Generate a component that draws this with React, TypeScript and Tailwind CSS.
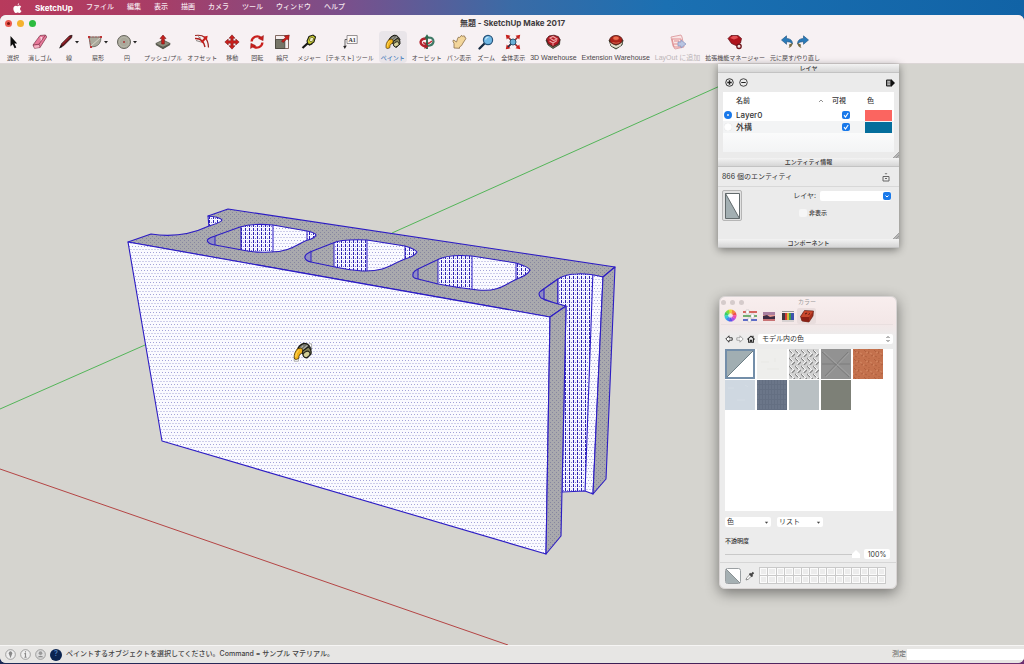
import React from "react";

type Tool = { label: string; icon: React.ReactNode; drop?: boolean; active?: boolean; disabled?: boolean; wide?: boolean; latin?: boolean };

function Svg({ children, wide }: { children: React.ReactNode; wide?: boolean }) {
  return (
    <svg aria-hidden="true" viewBox={wide ? "0 0 30 16" : "0 0 16 16"} className={wide ? "h-4 w-[30px] shrink-0" : "size-4 shrink-0"}>
      {children}
    </svg>
  );
}

function Bucket() {
  return (
    <g strokeLinejoin="round">
      <path d="M3.500 6.500Q5 2.500 9 1.200q3-.4 4.500 2L15 6l-7 3.500Z" fill="#6f7068" stroke="#16160f" strokeWidth="1" />
      <path d="M5 6.500 8.500 3M7.500 7 12 2.800" stroke="#b9b8ae" strokeWidth=".9" />
      <path d="M4 5.500C1.500 8 .8 10.500 1 13.300q.3 1.400 1.800 1.200l2-.8Q4.600 11.500 6 10l3-1.800L7 5Z" fill="#f3b41a" stroke="#4b3708" strokeWidth=".7" />
      <path d="M2.300 12.500Q2.300 9 4.600 7" fill="none" stroke="#ffdc6e" strokeWidth=".8" />
      <path d="M8 7.500 13 4q2.600 2.500 2 6l-3.500 3.300Q8 12.500 8 7.500Z" fill="#87865d" stroke="#1b1b14" strokeWidth="1" />
      <ellipse cx="11.300" cy="10.300" rx="3" ry="2.300" transform="rotate(-35 11.300 10.300)" fill="#d2ce96" stroke="#22221a" strokeWidth=".9" />
      <path d="M13 4.500q2-1 2 1.500" fill="none" stroke="#444" strokeWidth=".8" />
    </g>
  );
}

const RED = "#c9201d";

const tools: Tool[] = [
  { label: "選択", icon: <path d="M5.500 2v10.500l2.200-2.200 1.900 4 1.700-.8-1.800-3.900h2.700Z" fill="#0c0c0c" /> },
  {
    label: "消しゴム",
    icon: (
      <g stroke="#7a3446" strokeWidth=".7" strokeLinejoin="round">
        <path d="M1 11 8 1.500l5.500-.5 1.200 2L8 13.500l-5.500.8Z" fill="#e8799a" />
        <path d="m1 11 6-.8L13.500 1M7 10.200l1 3.300" fill="none" />
        <path d="m2 11.700 5-.7.7 2.200-5 .7Z" fill="#f4b3c4" stroke="none" />
        <path d="m8 4 2-.5-1 3" fill="none" stroke="#fff" />
      </g>
    ),
  },
  {
    label: "線",
    drop: true,
    icon: (
      <g>
        <path d="m2.500 13 1-3.200 8-8 2.600-.5-.6 2.500-8 8Z" fill="#6b1219" stroke="#1b0b0d" strokeWidth=".7" />
        <path d="m1 14.500 1.800-3.200 1.600 1.600Z" fill="#111" />
        <path d="m4.500 10 7-7" stroke="#c7383c" strokeWidth=".8" />
      </g>
    ),
  },
  {
    label: "扇形",
    drop: true,
    icon: (
      <g>
        <path d="M2 3h12q0 8-6 9.500L3.500 13Z" fill="#aaa99b" stroke="#6d6b62" strokeWidth=".9" />
        <path d="m3.500 12.500 10-9" stroke="#ded9cc" strokeWidth=".9" />
        <path d="M2 3h12M2 3l2 10" fill="none" stroke="#b85656" strokeWidth=".7" strokeDasharray="2 1" />
        <path d="M1 2h2v2H1zm12 0h2v2h-2zM3 12h2v2H3z" fill="#bd3434" />
      </g>
    ),
  },
  {
    label: "円",
    drop: true,
    icon: (
      <g>
        <circle cx="8" cy="8" r="6.500" fill="#aaa99b" stroke="#66655c" />
        <circle cx="8" cy="8" r="4.800" fill="none" stroke="#c0beb2" strokeWidth=".6" />
        <circle cx="8" cy="8" r="1" fill="#a93535" />
      </g>
    ),
  },
  {
    label: "プッシュ/プル",
    icon: (
      <g>
        <path d="m.8 9.500 7.200-3.500 7.200 3.500L8 14.500Z" fill="#8c8d7c" stroke="#44453b" strokeWidth=".7" />
        <path d="m.8 9.500 7.200 3.200 7.200-3.200v1.600L8 15.200.8 11Z" fill="#595a4f" />
        <path d="M8 1 11 4.600H9.300V10H6.700V4.600H5Z" fill={RED} stroke="#741312" strokeWidth=".6" />
      </g>
    ),
  },
  {
    label: "オフセット",
    icon: (
      <g fill="none">
        <path d="M1 1.500Q14-.5 14.500 13.500" stroke="#9b2421" strokeWidth="1.200" />
        <path d="M1 4.500q8-.5 10 8.500" stroke="#ae1d1b" strokeWidth="1.400" />
        <path d="m7.500 8.500 4-4.500" stroke={RED} strokeWidth="2" />
        <path d="m9.200 2.700 4.500-.9-.9 4.700Z" fill={RED} />
        <path d="M2 6.500 7 8M4 2.500l3 2" stroke="#5a5751" strokeWidth=".7" />
      </g>
    ),
  },
  {
    label: "移動",
    icon: <path d="m8 .8 3 3.400H9.200v2.600h2.600V5l3.400 3-3.400 3V9.200H9.200v2.600H11l-3 3.400-3-3.400h1.800V9.200H4.200V11L.8 8l3.400-3v1.800h2.600V4.200H5Z" fill={RED} stroke="#6e1110" strokeWidth=".5" />,
  },
  {
    label: "回転",
    icon: (
      <g>
        <path d="M2.600 7.500A5.500 5.500 0 0 1 12 4M13.400 8.500A5.500 5.500 0 0 1 4 12" fill="none" stroke={RED} strokeWidth="2.300" />
        <path d="m14.500 1.500-.4 5.200-4.700-2.200ZM1.500 14.500l.4-5.200 4.700 2.200Z" fill={RED} stroke="#851513" strokeWidth=".4" />
      </g>
    ),
  },
  {
    label: "縮尺",
    icon: (
      <g>
        <path d="M1.500 1.500h13v13h-13Z" fill="#f4eeee" stroke="#66483f" strokeWidth=".8" />
        <path d="M1.500 5.500h9.300v9H1.500Z" fill="#777668" stroke="#42413a" strokeWidth=".8" />
        <path d="m7.500 7 4-3.500L10.300 2l5-1-.8 5.200L13 5 9 8.600Z" fill={RED} stroke="#741312" strokeWidth=".5" />
      </g>
    ),
  },
  {
    label: "メジャー",
    icon: (
      <g>
        <path d="m7 9-5.500 5" stroke="#171714" strokeWidth="2.200" />
        <path d="m6 9 2.500 2 3-1.500" fill="none" stroke="#1b1c12" strokeWidth="1.200" />
        <path d="M6 7 8 2.500 12 1l2.500 2-1.500 5L9.500 10.500 7 10Z" fill="#cfd02f" stroke="#1b1c12" strokeWidth="1.100" />
        <ellipse cx="10.500" cy="5.500" rx="1.800" ry="2.400" transform="rotate(30 10.500 5.500)" fill="#efeec2" stroke="#5d5e1f" strokeWidth=".8" />
      </g>
    ),
  },
  {
    label: "[テキスト] ツール",
    icon: (
      <g>
        <path d="M5 1.500h10.200v8H5Z" fill="#fcf9f9" stroke="#807b7b" strokeWidth=".8" />
        <path d="M5 5.500H3V13" fill="none" stroke="#555" strokeWidth=".9" />
        <path d="m1.200 12 3.600-.5-2 3.500Z" fill="#282525" />
        <text x="6.500" y="8" className="fill-[#333] font-['Liberation_Serif',serif] text-[6px] font-bold">A1</text>
      </g>
    ),
  },
  { label: "ペイント", active: true, icon: <Bucket /> },
  {
    label: "オービット",
    icon: (
      <g fill="none">
        <path d="M9.500 3.500q5 0 5 4.300-.7 4-6 4" stroke="#407b67" strokeWidth="2.200" />
        <path d="M6.500 12.500Q1 11 1.700 7.500 2.500 4.500 7 4.500" stroke="#b5222c" strokeWidth="2.400" />
        <path d="M4 8.500q5 2.500 9-1.500" stroke="#bd3038" strokeWidth="1.500" />
        <path d="M8 4v11" stroke="#265c40" strokeWidth="1.800" />
        <path d="m8 .3 2.800 4.200H5.200Z" fill="#2d6b4f" />
        <path d="m5.500 9 4 3.500-4 2.500Z" fill="#aa202a" />
      </g>
    ),
  },
  {
    label: "パン表示",
    icon: <path d="M3 14V9.500Q1.500 7 2 6.300q1-.5 2 .7L5.500 8 7 3.500q1.200-.8 1.500.2L10 1.700q1.300-.4 1.400.6L13 1.800q1.200.2.600 1.400l.8.200q.9.500.3 1.500L12 9q-1 3-3.500 4v1.300Z" fill="#f3d69b" stroke="#8b704a" strokeWidth=".8" strokeLinejoin="round" />,
  },
  {
    label: "ズーム",
    icon: (
      <g>
        <path d="m6.500 9.500-5 5" stroke="#152b43" strokeWidth="2.300" strokeLinecap="round" />
        <circle cx="10" cy="6" r="4.600" fill="#70b8e5" stroke="#28547b" strokeWidth="1.200" />
        <path d="M7.500 5.500Q8 3.200 10.500 3" fill="none" stroke="#cdecfa" strokeWidth="1.200" />
      </g>
    ),
  },
  {
    label: "全体表示",
    icon: (
      <g>
        <path d="m2.500 2.500 4 4m7-4-4 4m-7 7 4-4m7 4-4-4" stroke="#9c2626" strokeWidth="1.600" />
        <path d="m.8.8 4.700.9L1.700 5.500Zm14.400 0-4.700.9 3.800 3.800ZM.8 15.200l4.700-.9-3.800-3.800Zm14.400 0-4.700-.9 3.800-3.800Z" fill={RED} />
        <path d="m6 10-3 3" stroke="#18334e" strokeWidth="1.500" />
        <circle cx="8" cy="8" r="3" fill="#68b1d8" stroke="#285470" />
      </g>
    ),
  },
  {
    label: "3D Warehouse",
    latin: true,
    icon: (
      <g>
        <path d="m1 6 2 5 5 3.500 6.500-4L15 5Z" fill="#6b7259" stroke="#313629" strokeWidth=".8" />
        <path d="m1.500 5 2.500-3 5-.8 4.500 1.500L15 6l-2 4-5 2.500L3 9.500Z" fill="#b31d25" stroke="#491115" strokeWidth=".8" />
        <path d="m5 4 3-1.500L12 5 8.500 6.500ZM4.500 7 8 9l4-2.500M8 9v2.500" fill="none" stroke="#efa3a4" strokeWidth="1.100" />
      </g>
    ),
  },
  {
    label: "Extension Warehouse",
    latin: true,
    icon: (
      <g>
        <path d="m1 6 2 6 5 3 6-4 1-5Z" fill="#727960" stroke="#303727" strokeWidth=".9" />
        <path d="m1.500 8 6.500 4 6.500-4-2 4-4.500 2-4.500-2Z" fill="#e3dfce" />
        <ellipse cx="8" cy="6" rx="6.300" ry="4.500" fill="#ae2018" stroke="#4a1914" strokeWidth=".8" />
        <ellipse cx="8" cy="4.200" rx="3.200" ry="2.200" fill="#ef6d4e" stroke="#8c1b15" strokeWidth=".6" />
        <path d="M4.500 8.500q3.500 1.500 7 0" fill="none" stroke="#d9765c" strokeWidth=".8" />
      </g>
    ),
  },
  {
    label: "LayOut に追加",
    latin: true,
    disabled: true,
    icon: (
      <g>
        <path d="m1 3 10-2 1 2 2 10-9 2-2-3Z" fill="#fae6e6" stroke="#db9b9e" strokeWidth=".9" />
        <path d="M2 5h9v8H4ZM4 7h5v3H4" fill="none" stroke="#df8e91" />
        <path d="M8 8h3V6l5 4-5 4v-2H8Z" fill="#b8c4e1" stroke="#8495c1" strokeWidth=".7" />
      </g>
    ),
  },
  {
    label: "拡張機能マネージャー",
    icon: (
      <g>
        <path d="m1 4.500 3-3h7l3.500 3-1 4.500-3 2.500H9l-4.500-2Z" fill="#ae131c" stroke="#590c12" strokeWidth=".7" />
        <path d="m3 4 3-2h4l1 2-4 1.500Z" fill="#e35155" />
        <circle cx="12" cy="12.300" r="2.200" fill="#eee2df" stroke="#6d1218" strokeWidth="1.300" />
      </g>
    ),
  },
  {
    label: "元に戻す/やり直し",
    wide: true,
    icon: (
      <g>
        <path d="m1.500 6 5-4.200v2.600q6 .3 6 5.600-1.800-2.700-6-2.300v2.600Z" fill="#297ab9" stroke="#1b507e" strokeWidth=".6" />
        <path d="M12.500 9q0 4-4 5 1.500-1.500.5-3.500" fill="#776b41" />
        <path d="m28.500 6-5-4.200v2.600q-6 .3-6 5.600 1.800-2.700 6-2.300v2.600Z" fill="#297ab9" stroke="#1b507e" strokeWidth=".6" />
        <path d="M17.500 9q0 4 4 5-1.500-1.500-.5-3.500" fill="#776b41" />
      </g>
    ),
  },
];

const menus = ["ファイル", "編集", "表示", "描画", "カメラ", "ツール", "ウィンドウ", "ヘルプ"];

function MenuBar() {
  return (
    <nav className="flex h-[15px] shrink-0 items-center gap-[13px] bg-[linear-gradient(90deg,#b83a5c_0%,#a83d66_15%,#79508c_34%,#3a6ba6_50%,#1b70b2_65%,#1163a6_100%)] pl-[13px] text-[7px] font-medium text-[#f5e6ee]">
      <button aria-label="Apple" className="flex">
        <svg viewBox="0 0 16 18" className="h-2.5 w-[9px]">
          <path d="M11 0q.2 3-3 4.300Q8 1.500 11 0Zm0 4.700q2.200 0 3.700 2-2.500 1.500-2.200 4 .2 2.300 2.800 3.500Q13.500 18 11.500 18c-1.500 0-1.700-.8-3.200-.8S6.500 18 5 18C3 18 .5 13.500.5 10.200.5 6.800 2.800 4.800 5 4.800c1.500 0 2.400.9 3.400.9S10 4.700 11 4.700Z" fill="#fff" />
        </svg>
      </button>
      <button className="text-[8px] font-bold text-white">SketchUp</button>
      {menus.map((m) => (
        <button key={m} className="whitespace-nowrap">{m}</button>
      ))}
    </nav>
  );
}

function Toolbar() {
  return (
    <header className="shrink-0 border-b border-[#dcd6d6] bg-[#f7f1f3]">
      <div className="grid h-4 grid-cols-[1fr_auto_1fr] items-center pl-[5px] pr-1">
        <div className="flex gap-[5px]">
          <button aria-label="閉じる" className="flex size-[7px] items-center justify-center rounded-full bg-[#ec5b51]"><span className="size-[3px] rounded-full bg-[#7e1611]" /></button>
          <button aria-label="しまう" className="size-[7px] rounded-full bg-[#f4b22e]" />
          <button aria-label="拡大" className="size-[7px] rounded-full bg-[#2dbb3f]" />
        </div>
        <h1 className="text-[8px] font-bold text-[#3f3b3d]">無題 - SketchUp Make 2017</h1>
      </div>
      <div className="flex h-8 gap-[5px] pl-[3px]">
        {tools.map((t) => (
          <button
            key={t.label}
            disabled={t.disabled}
            className={
              "flex shrink-0 flex-col items-center gap-[3px] whitespace-nowrap leading-[9px] pt-[3px] " +
              (t.latin ? "font-['Liberation_Sans','Noto_Sans_CJK_JP',sans-serif] text-[7px] " : "text-[6px] ") +
              (t.drop ? "min-w-6 " : "min-w-5 ") +
              (t.active ? "rounded-sm bg-[#e9e5e9] px-0.5 text-[#2264b2]" : t.disabled ? "text-[#bab4b6]" : "text-[#4a4648]")
            }
          >
            <span className="flex items-center">
              <Svg wide={t.wide}>{t.icon}</Svg>
              {t.drop && <svg aria-hidden="true" viewBox="0 0 6 6" className="size-1.5"><path d="M1 2h4L3 4.500Z" fill="#222" /></svg>}
            </span>
            {t.label}
          </button>
        ))}
      </div>
    </header>
  );
}

const notch = "M541 298Q537 293 541 291L558 279Q566 274 577 274Q586 273 603 277L593 494L585 491L562 492L566 306Q553 303 541 298Z";
const hole1 = "M208 242Q205 239 215 236L240 227Q253 223 273 225L307 231Q316 233 316 235Q315 238 308 240C298 243 291 252 270 252Q255 253 242 250L215 245Q209 244 208 242Z";
const hole2 = "M305 258Q304 255 310 252L333 243Q342 239 367 240L405 246Q415 249 417 252Q415 256 405 259C393 263 386 272 362 271Q348 270 335 267L311 262Q306 261 305 258Z";
const hole3 = "M413 276Q412 272 418 269L437 260Q448 254 472 256L516 263Q529 267 530 270Q528 275 517 279C505 284 500 292 478 290Q459 288 438 284L418 279Q413 278 413 276Z";

const holes = [
  { id: "h1", d: hole1, small: 215, left: 241, mid: 273, right: 307, top: 222, bottom: 254 },
  { id: "h2", d: hole2, small: 311, left: 334, mid: 367, right: 405, top: 238, bottom: 273 },
  { id: "h3", d: hole3, small: 418, left: 438, mid: 472, right: 516, top: 253, bottom: 292 },
];

function Model() {
  const edge = { stroke: "#2c1cc4", strokeWidth: 1.1, strokeLinejoin: "round" as const };
  return (
    <svg role="img" aria-label="モデル" viewBox="0 64 1024 581" preserveAspectRatio="xMinYMin slice" className="block h-full w-full">
      <defs>
        <pattern id="light" width="3" height="6" patternUnits="userSpaceOnUse">
          <rect width="3" height="6" fill="#fafaff" />
          <path d="M0 0h1v1H0zM1.500 3h1v1h-1z" fill="#a3a3d8" />
        </pattern>
        <pattern id="gray" width="4" height="4" patternUnits="userSpaceOnUse">
          <rect width="4" height="4" fill="#a9a9ad" />
          <path d="M0 0h1v1H0zM2 2h1v1H2z" fill="#8686a0" />
        </pattern>
        <pattern id="dense" width="4" height="4" patternUnits="userSpaceOnUse">
          <rect width="4" height="4" fill="#f4f4ff" />
          <path d="M1 0h1v3H1z" fill="#2d22b0" />
          <path d="M3 2h1v1H3z" fill="#7d78d0" />
        </pattern>
        {holes.map((h) => (
          <clipPath key={h.id} id={h.id}><path d={h.d} /></clipPath>
        ))}
        <clipPath id="notch"><path d={notch} /></clipPath>
      </defs>
      <path d="M0 409 145 345M392 233 740 77" stroke="#44b14b" strokeWidth=".9" fill="none" />
      <path d="M0 469 508 645" stroke="#b03434" strokeWidth=".9" />
      <path d="M208 216 222 216V224L209 227Z" fill="url(#dense)" {...edge} />
      <path d="M128 242 151 234Q181 239 209 226Q222 222 222 220Q220 217 208 216L228 209 615 267 603 277Q577 272 558 279L541 291Q537 296 545 300L566 306 550 317Z" fill="url(#gray)" {...edge} />
      <path d="M128 242 550 317 546 554 162 441Z" fill="url(#light)" {...edge} />
      {holes.map((h) => (
        <g key={h.id}>
          <g clipPath={`url(#${h.id})`} stroke="#2c1cc4">
            <path d={h.d} fill="url(#light)" stroke="none" />
            <rect x={h.small - 12} y={h.top} width={h.left - h.small + 12} height={h.bottom - h.top} fill="url(#gray)" stroke="none" />
            <rect x={h.small - 12} y={h.top} width="12" height={h.bottom - h.top} fill="#8f8cc4" />
            <rect x={h.left} y={h.top} width={h.mid - h.left} height={h.bottom - h.top} fill="url(#dense)" />
            <rect x={h.right} y={h.top} width="16" height={h.bottom - h.top} fill="url(#dense)" />
          </g>
          <path d={h.d} fill="none" {...edge} />
        </g>
      ))}
      <path d={notch} fill="url(#light)" />
      <g clipPath="url(#notch)">
        <path d="M538 275H558V310H538Z" fill="url(#gray)" {...edge} />
        <path d="M558 270H593L585 493H558Z" fill="url(#dense)" {...edge} />
        <path d="M538 285H544V300H538Z" fill="#8f8cc4" {...edge} />
      </g>
      <path d={notch} fill="none" {...edge} />
      <path d="M603 277 615 267 606 479 593 494Z" fill="url(#gray)" {...edge} />
      <path d="M550 317 566 306 561 536 546 554Z" fill="url(#gray)" {...edge} />
      <g transform="translate(293 342) scale(1.2)">
        <path d="M1 13.500h3.500v2.500H1ZM13 1.500h2.500v4" fill="#fff" stroke="#777" strokeWidth=".5" />
        <Bucket />
      </g>
    </svg>
  );
}

function PanelHeader({ children }: { children: React.ReactNode }) {
  return (
    <h2 className="flex h-[9px] items-center justify-center border-b border-[#c3c3c3] bg-gradient-to-b from-[#f3f3f3] to-[#d6d6d6] text-[6px] font-medium text-[#333]">{children}</h2>
  );
}

function Grip() {
  return <svg aria-hidden="true" viewBox="0 0 6 6" className="ml-auto size-1.5"><path d="M0 6 6 0V6Z" fill="#b5b5b5" /><path d="M0 6 6 0M3 6l3-3" stroke="#8d8d8d" strokeWidth=".7" /></svg>;
}

function Check({ label, on }: { label: string; on?: boolean }) {
  return (
    <span className="relative flex size-2 items-center justify-center">
      <input type="checkbox" aria-label={label} defaultChecked={on} className="peer size-2 appearance-none rounded-xs bg-[#f6f6f6] checked:bg-[#1979ea]" />
      <svg aria-hidden="true" viewBox="0 0 8 8" className="pointer-events-none absolute hidden size-2 peer-checked:block"><path d="M2 4.200 3.500 6 6.200 2" fill="none" stroke="#fff" strokeWidth="1.100" /></svg>
    </span>
  );
}

const layers = [
  { name: "Layer0", color: "bg-[#fb6560]", row: "bg-white", on: true },
  { name: "外構", color: "bg-[#056e9c]", row: "bg-[#f3f4f5]", on: false },
];

function LayerPanel() {
  return (
    <section className="absolute right-[125px] top-0 w-[181px] rounded-b-sm bg-[#ebebeb] text-[7px] leading-[8px] text-[#333] shadow-[0_2px_8px_rgba(0,0,0,0.45)]">
      <PanelHeader>レイヤ</PanelHeader>
      <div className="flex h-[19px] items-center gap-[5px] pl-[7px] pr-1">
        <button aria-label="レイヤを追加"><svg viewBox="0 0 10 10" className="size-[9px]"><circle cx="5" cy="5" r="4.200" fill="none" stroke="#222" /><path d="M5 2.500v5M2.500 5h5" stroke="#222" strokeWidth="1.500" /></svg></button>
        <button aria-label="レイヤを削除"><svg viewBox="0 0 10 10" className="size-[9px]"><circle cx="5" cy="5" r="4.200" fill="none" stroke="#333" /><path d="M2.500 5h5" stroke="#222" strokeWidth="1.200" /></svg></button>
        <button aria-label="詳細" className="ml-auto"><svg viewBox="0 0 10 10" className="size-[10px]"><path d="M1.500 2h4.500v6H1.500Z" fill="#777" stroke="#222" /><path d="M2.500 3.500h2.500M2.500 5h2.500M2.500 6.500h2.500" stroke="#ddd" strokeWidth=".6" /><path d="M6 1 10 5 6 9Z" fill="#111" /></svg></button>
      </div>
      <div className="mx-[5px] h-[60px] bg-gradient-to-b from-white via-white to-[#f3f4f5]">
        <table className="w-full table-fixed border-collapse text-left">
          <thead>
            <tr className="h-[17px]">
              <th className="w-[13px]" aria-label="現在" />
              <th className="font-medium"><span className="flex items-center justify-between pr-2">名前<svg aria-hidden="true" viewBox="0 0 6 6" className="size-1.5"><path d="m1 4 2-2 2 2" fill="none" stroke="#777" strokeWidth=".8" /></svg></span></th>
              <th className="w-[33px] font-medium">可視</th>
              <th className="w-[29px] pl-0.5 font-medium">色</th>
            </tr>
          </thead>
          <tbody>
            {layers.map((l) => (
              <tr key={l.name} className={"h-3 " + l.row}>
                <td className="p-0 pl-px"><input type="radio" name="layer" aria-label={l.name} defaultChecked={l.on} className="block size-2 appearance-none rounded-full bg-white shadow-[inset_0_0_1px_#ccc] checked:border-[3px] checked:border-[#1979ea]" /></td>
                <td className="p-0 text-[8px] font-medium">{l.name}</td>
                <td className="p-0 pl-2.5"><Check label={l.name + " 可視"} on /></td>
                <td className="p-0"><div className={"h-[11px] w-[27px] " + l.color} /></td>
              </tr>
            ))}
          </tbody>
        </table>
      </div>
      <div className="h-1.5"><Grip /></div>
      <PanelHeader>エンティティ情報</PanelHeader>
      <div className="flex h-5 items-center justify-between border-b border-[#d8d8d8] pl-1 pr-2">
        <p>866 個のエンティティ</p>
        <button aria-label="詳細を表示"><svg viewBox="0 0 10 10" className="size-[10px]"><path d="M2 4.500h6V9H2ZM4 6.500h2" fill="none" stroke="#666" /><path d="M3.500 1h3L5 2.800Z" fill="#888" /></svg></button>
      </div>
      <div className="flex h-[46px] pl-1 pt-[3px]">
        <button aria-label="マテリアル" className="flex h-[31px] w-5 items-center justify-center rounded-xs border border-[#b5b5b5] bg-[#e2e2e2]">
          <svg viewBox="0 0 15 26" className="h-[26px] w-[15px]"><path d="M.5.500h14v25H.5Z" fill="#fff" /><path d="M.5.500 14.500 25.500H.5Z" fill="#a3afb2" /><path d="M.5.500h14v25H.5ZM.5.500l14 25" fill="none" stroke="#626a6c" /></svg>
        </button>
        <div className="flex flex-1 flex-col gap-2 pr-2 pt-px">
          <label className="flex h-2.5 items-center justify-end gap-1">
            レイヤ:
            <span className="relative flex w-[71px]">
              <select className="h-2.5 w-full appearance-none rounded-xs bg-white" defaultValue=""><option value="" /></select>
              <svg aria-hidden="true" viewBox="0 0 8 8" className="pointer-events-none absolute right-0 top-px size-2"><rect width="8" height="8" rx="2" fill="#1979ea" /><path d="m2.500 3.500 1.500 1.500 1.500-1.500" fill="none" stroke="#fff" /></svg>
            </span>
          </label>
          <div className="flex items-center gap-0.5 pl-[57px]"><Check label="非表示" /><span className="text-[6px] font-medium">非表示</span></div>
        </div>
      </div>
      <div className="h-1.5"><Grip /></div>
      <PanelHeader>コンポーネント</PanelHeader>
    </section>
  );
}

function Swatch({ kind }: { kind: number }) {
  return (
    <svg aria-hidden="true" viewBox="0 0 30 30" className="block size-[30px]">
      <defs>
        <pattern id="tread" width="6" height="8" patternUnits="userSpaceOnUse"><rect width="6" height="8" fill="#d2d2d2" /><path d="m0 1 3 3M3 8l3-3" stroke="#858585" strokeWidth="1.200" /><path d="m1 1 3 3M2 7l3-3" stroke="#f4f4f4" /></pattern>
        <pattern id="brick" width="10" height="9" patternUnits="userSpaceOnUse"><rect width="10" height="9" fill="#c4714d" /><path d="m1 1 2 2M6 2l-1 3M8 7l2-1M2 7l2 1M5 0h2" stroke="#ab5c3a" strokeWidth=".8" /><path d="m3 4 2-1M7 4l2 1M1 6l-1 2" stroke="#d58b66" strokeWidth=".8" /></pattern>
        <pattern id="slate" width="3" height="5" patternUnits="userSpaceOnUse"><rect width="3" height="5" fill="#646f82" /><path d="M1 0v4" stroke="#788295" strokeWidth=".7" /></pattern>
      </defs>
      {kind === 0 && <><rect width="30" height="30" fill="#738ea9" /><path d="M2 2h26v26H2Z" fill="#fff" /><path d="M2 2h26L2 28Z" fill="#a1aeb2" /><path d="M28 2 2 28" stroke="#6d7f86" /></>}
      {kind === 1 && <><rect width="30" height="30" fill="#eeeeec" /><path d="M4 13h8M18 9v4M10 20h12" stroke="#e8e8e5" /></>}
      {kind === 2 && <rect width="30" height="30" fill="url(#tread)" />}
      {kind === 3 && <><rect width="30" height="30" fill="#929292" /><path d="m1 3 27 25M27 3 4 27M1 15h28" stroke="#7d7d7d" /><path d="m3 3 26 24M28 4 5 28" stroke="#a8a8a8" strokeWidth=".7" /></>}
      {kind === 4 && <rect width="30" height="30" fill="url(#brick)" />}
      {kind === 5 && <><rect width="30" height="30" fill="#cfd8e1" /><path d="M3 8h6M20 5l3 2M12 20h8" stroke="#d5dde5" /></>}
      {kind === 6 && <rect width="30" height="30" fill="url(#slate)" />}
      {kind === 7 && <rect width="30" height="30" fill="#b9c0c3" />}
      {kind === 8 && <rect width="30" height="30" fill="#7d8077" />}
    </svg>
  );
}

const materialNames = ["デフォルト", "白", "鉄板", "石", "レンガ", "ガラス", "スレート", "グレー", "ダークグレー"];

const wheel = ["#f0504d", "#f18a3a", "#ecd738", "#7fdc3c", "#37cf6a", "#34cfd0", "#3b8fee", "#5a56e8", "#a94de6", "#ee4bb0"];

const modes = [
  {
    name: "カラーホイール",
    icon: (
      <g>
        {wheel.map((c, i) => {
          const a = (i * Math.PI) / 5;
          const b = ((i + 1) * Math.PI) / 5 + 0.05;
          return <path key={c} fill={c} d={`M7 7 ${7 + 6.5 * Math.cos(a)} ${7 - 6.5 * Math.sin(a)}A6.500 6.500 0 0 0 ${7 + 6.5 * Math.cos(b)} ${7 - 6.5 * Math.sin(b)}Z`} />;
        })}
        <circle cx="7" cy="7" r="2.500" fill="#fff" fillOpacity=".75" />
      </g>
    ),
  },
  { name: "スライダ", icon: <g><path d="M0 2h14v2H0z" fill="#d56560" /><path d="M0 6h14v2H0z" fill="#72ae71" /><path d="M0 10h14v2H0z" fill="#5d6cc7" /><path d="M3 1h3v4H3zm5 4h3v4H8zM5 9h3v4H5z" fill="#fff" stroke="#aaa" strokeWidth=".4" /></g> },
  { name: "画像", icon: <g><path d="M1 3h12v9H1Z" fill="#e99c94" /><path d="M1 3h12v3H1Z" fill="#a97fa0" /><path d="m1 7 4-1 3 2 5-1v3H1Z" fill="#3c2b42" /><path d="M1 10h12v2H1Z" fill="#c87274" /></g> },
  { name: "鉛筆", icon: <g><path d="M1 4h3v7H1Z" fill="#3f3742" /><path d="M4 4h2v7H4Z" fill="#d03c3a" /><path d="M6 4h2v7H6Z" fill="#d6b83a" /><path d="M8 4h2v7H8Z" fill="#3b9a50" /><path d="M10 4h3v7h-3Z" fill="#3d52ad" /><path d="M1 2h12v1H1z" fill="#999" /><path d="M1 12h12" stroke="#bbb" /></g> },
  { name: "マテリアル", icon: <g><path d="m.5 7.500 4-6 9 .5-.5 5-4 6-7-1Z" fill="#a32e1d" stroke="#56180f" strokeWidth=".6" /><path d="m1 8 3.500-6 8.500.5L9 8Z" fill="#c8482d" /><path d="m1 8 8 0v5l-7-1Z" fill="#8b2015" /><path d="m5 5 2-1M8.500 5.500l1.500-1" stroke="#54170f" /></g> },
];

function SmallSelect({ label, value }: { label: string; value: string }) {
  return (
    <span className="relative flex w-[46px] items-center">
      <select aria-label={label} className="h-2.5 w-full appearance-none rounded-xs bg-white pl-0.5 text-[7px] leading-[10px]"><option>{value}</option></select>
      <svg aria-hidden="true" viewBox="0 0 6 6" className="pointer-events-none absolute right-0.5 size-[5px]"><path d="M1 2h4L3 4.500Z" fill="#444" /></svg>
    </span>
  );
}

function ColorPanel() {
  return (
    <section className="absolute right-[127px] top-[232px] w-[178px] rounded-md border border-[#d8d4d4] bg-[linear-gradient(#f8eeee_0px,#f3e7e7_26px,#ececec_40px)] pl-[5px] pr-[3px] text-[7px] leading-[8px] text-[#333] shadow-[0_4px_14px_rgba(0,0,0,0.45)]">
      <div className="-ml-1 grid h-[10px] grid-cols-[1fr_auto_1fr] items-center">
        <div className="flex gap-1">
          {["閉じる", "しまう", "拡大"].map((n) => <button key={n} aria-label={n} className="size-[5px] rounded-full bg-[#d5cbcb]" />)}
        </div>
        <h2 className="text-[6px] text-[#999]">カラー</h2>
      </div>
      <div className="-ml-1 flex h-[18px] items-center border-b border-[#e9dfdf]">
        {modes.map((m, i) => (
          <button key={m.name} aria-label={m.name} className={"flex h-4 w-[19px] items-center justify-center " + (i === 4 ? "rounded-xs bg-[#e9dddd]" : "")}>
            <svg viewBox="0 0 14 14" className={i === 0 ? "size-[13px]" : "size-3.5"}>{m.icon}</svg>
          </button>
        ))}
      </div>
      <div className="flex h-6 items-center gap-[3px] pt-1">
        <button aria-label="戻る"><svg viewBox="0 0 10 10" className="size-2"><path d="m1 5 4-4v2.500h4v3H5V9Z" fill="#fff" stroke="#222" strokeWidth="1.100" /></svg></button>
        <button aria-label="進む"><svg viewBox="0 0 10 10" className="size-2"><path d="M9 5 5 1v2.500H1v3h4V9Z" fill="#fff" stroke="#999" strokeWidth="1.100" /></svg></button>
        <button aria-label="ホーム"><svg viewBox="0 0 10 10" className="size-2"><path d="m.5 5.500 4.500-4 4.500 4M2 5v4h2.200V6.500h1.600V9H8V5M7.500 1v2" fill="none" stroke="#222" strokeWidth="1.300" /></svg></button>
        <span className="relative flex flex-1 items-center">
          <select aria-label="コレクション" className="h-2.5 w-full appearance-none rounded-xs bg-white pl-1 text-[7px] leading-[10px]"><option>モデル内の色</option></select>
          <svg aria-hidden="true" viewBox="0 0 6 8" className="pointer-events-none absolute right-0.5 h-2 w-1.5"><path d="m1.500 3 1.500-1.500L4.500 3M1.500 5 3 6.500 4.500 5" fill="none" stroke="#444" strokeWidth=".8" /></svg>
        </span>
      </div>
      <div className="flex h-[162px] flex-wrap content-start gap-x-0.5 gap-y-px bg-white">
        {materialNames.map((n, i) => <button key={n} aria-label={n}><Swatch kind={i} /></button>)}
      </div>
      <div className="flex h-[22px] items-center gap-1.5">
        <SmallSelect label="表示" value="色" />
        <SmallSelect label="並び" value="リスト" />
      </div>
      <label htmlFor="opacity" className="flex h-4 items-center text-[6px] font-medium">不透明度</label>
      <div className="flex h-[13px] items-center gap-1 pb-[3px] pr-[3px]">
        <input id="opacity" type="range" defaultValue={100} className="h-2.5 min-w-0 flex-1 appearance-none bg-[linear-gradient(#c9c9c9,#c9c9c9)] bg-[length:100%_1px] bg-center bg-no-repeat [&::-webkit-slider-thumb]:h-2 [&::-webkit-slider-thumb]:w-2 [&::-webkit-slider-thumb]:appearance-none [&::-webkit-slider-thumb]:bg-white [&::-webkit-slider-thumb]:[clip-path:polygon(50%_0,100%_50%,100%_100%,0_100%,0_50%)]" />
        <input aria-label="不透明度の値" defaultValue="100%" className="h-2.5 w-[26px] rounded-xs bg-white text-center text-[7px]" />
      </div>
      <div className="-ml-[5px] -mr-[3px] flex h-[26px] items-center gap-1 border-t border-[#d6d6d6] pl-[5px] pr-2.5">
        <button aria-label="現在の色"><svg viewBox="0 0 16 16" className="size-4"><rect x=".5" y=".5" width="15" height="15" rx="2" fill="#fff" stroke="#9a9fa2" /><path d="m1 1 14 14H1Z" fill="#a5b0b3" /><path d="m1 1 14 14" stroke="#777f82" strokeWidth=".8" /></svg></button>
        <button aria-label="スポイト"><svg viewBox="0 0 10 10" className="size-[10px]"><path d="m1 9 .7-2.200L5.500 3 7 4.500 3.200 8.300Z" fill="#fff" stroke="#777" strokeWidth=".8" /><path d="m4.500 2.500 3 3M6.500 3.500 8.500 1.500" stroke="#444" strokeWidth="1.800" /></svg></button>
        <div className="grid flex-1 grid-cols-15 border-l border-t border-[#c9c9c9]">
          {Array.from({ length: 30 }, (_, i) => <button key={i} aria-label={"カラー " + (i + 1)} className="h-2 border-b border-r border-[#c9c9c9] bg-[#ececec] shadow-[inset_0_0_0_1px_#fbfbfb]" />)}
        </div>
      </div>
    </section>
  );
}

function StatusBar() {
  return (
    <footer className="flex h-[18px] shrink-0 items-center border-t border-[#f6f5f4] bg-[#e7e6e4] pl-[5px] text-[7px] font-medium text-[#444]">
      <div className="flex gap-1">
        <button aria-label="位置情報"><svg viewBox="0 0 12 12" className="size-[11px]"><circle cx="6" cy="6" r="5.300" fill="#eee" stroke="#888" strokeWidth=".8" /><path d="M6 10 4.500 6a2 2 0 1 1 3 0Z" fill="#888" /></svg></button>
        <button aria-label="クレジット"><svg viewBox="0 0 12 12" className="size-[11px]"><circle cx="6" cy="6" r="5.300" fill="#eee" stroke="#888" strokeWidth=".8" /><path d="M6 2.500v1.200M4.800 5H6v4M4.800 9h2.400" fill="none" stroke="#888" strokeWidth="1.200" /></svg></button>
        <button aria-label="サインイン"><svg viewBox="0 0 12 12" className="size-[11px]"><circle cx="6" cy="6" r="5.300" fill="#ddd" stroke="#888" strokeWidth=".8" /><circle cx="6" cy="4.500" r="2" fill="#999" /><path d="M2.500 9q3.500-3.500 7 0Z" fill="#888" /></svg></button>
        <button aria-label="ヘルプ" className="flex size-3 items-center justify-center rounded-full bg-[#0b2450] text-[7px] font-bold text-[#4b78b5]">?</button>
      </div>
      <p className="pl-1">ペイントするオブジェクトを選択してください。Command = サンプル マテリアル。</p>
      <label className="ml-auto flex items-center gap-px text-[#777]">測定<input className="h-[11px] w-[117px] bg-white" /></label>
    </footer>
  );
}

export default function App() {
  return (
    <div lang="ja" className="flex h-screen flex-col overflow-hidden bg-[#1d2e60] font-['Inter','Noto_Sans_CJK_JP',sans-serif]">
      <MenuBar />
      <div className="flex min-h-0 flex-1 flex-col bg-[linear-gradient(90deg,#b83a5c_0%,#79508c_34%,#1b70b2_65%,#1163a6_100%)]">
        <div className="flex min-h-0 flex-1 flex-col rounded-t-md bg-[linear-gradient(90deg,#1d2c58_0%,#3a1f55_60%,#6b2f70_100%)] pb-px">
          <div className="flex min-h-0 flex-1 flex-col overflow-hidden rounded-md bg-[#d5d4cf]">
            <Toolbar />
            <main className="relative min-h-0 flex-1">
              <Model />
              <LayerPanel />
              <ColorPanel />
            </main>
            <StatusBar />
          </div>
        </div>
      </div>
    </div>
  );
}
